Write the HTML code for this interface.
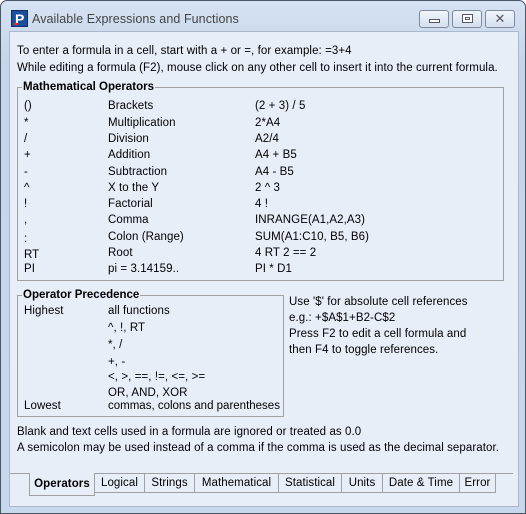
<!DOCTYPE html>
<html><head><style>
*{margin:0;padding:0;box-sizing:border-box}
body{width:526px;height:514px;overflow:hidden;background:#fff;font-family:"Liberation Sans",sans-serif;font-size:11.5px;color:#000;letter-spacing:0.08px}
#win{position:absolute;left:0;top:0;width:526px;height:514px;border:1px solid #4a5565;border-radius:7px 7px 0 0;background:linear-gradient(#d5e2f2,#c6d6ea 60px,#c8d8ec);}
#client{position:absolute;left:8px;top:30px;width:510px;height:476px;background:#e8eef8;border:1px solid #a9b8cc}
.t{position:absolute;white-space:nowrap;line-height:14px}
.box{position:absolute;border:1px solid #a0a0a0}
.lg{position:absolute;background:#e8eef8;font-weight:bold;padding:0 1px;line-height:14px;letter-spacing:0}
.btn{position:absolute;top:9px;height:18px;border:1px solid #7d8aa0;border-radius:3px;background:linear-gradient(#f0f5fb,#d3dfee)}
.tab{position:absolute;top:473px;height:20px;border:1px solid #a0a0a0;border-left:none;line-height:19px;text-align:center;background:#e8eef8}
</style></head><body>
<div id="win">
<div style="position:absolute;left:10px;top:9px;width:17px;height:17px;background:#1a4f9c;border:1px solid #0c2f66"><div style="position:absolute;left:3px;top:1px;color:#fff;font-weight:bold;font-size:14px;line-height:14px">P</div><div style="position:absolute;left:2px;top:12px;width:4px;height:2px;background:#e22"></div></div>
<div class="t" style="left:31px;top:11px;font-size:12.5px;color:#444">Available Expressions and Functions</div>
<div class="btn" style="left:418px;width:30px"><div style="position:absolute;left:9px;top:8px;width:11px;height:4px;border:1px solid #556;background:#fff"></div></div>
<div class="btn" style="left:451px;width:30px"><div style="position:absolute;left:9px;top:3px;width:11px;height:9px;border:1px solid #556;background:#fff"><div style="position:absolute;left:2px;top:2px;width:5px;height:3px;border:1px solid #556"></div></div></div>
<div class="btn" style="left:484px;width:30px;text-align:center;color:#556;line-height:15px;font-size:13px">✕</div>
<div id="client"></div>
</div>
<div class="t" style="left:17px;top:44px">To enter a formula in a cell, start with a + or =, for example: =3+4</div>
<div class="t" style="left:17px;top:61px">While editing a formula (F2), mouse click on any other cell to insert it into the current formula.</div>

<div class="box" style="left:17px;top:87px;width:487px;height:194px"></div>
<div class="lg" style="left:22px;top:80px">Mathematical Operators</div>
<div class="t" style="left:24px;top:99px">()</div><div class="t" style="left:108px;top:99px">Brackets</div><div class="t" style="left:255px;top:99px">(2 + 3) / 5</div>
<div class="t" style="left:24px;top:116px">*</div><div class="t" style="left:108px;top:116px">Multiplication</div><div class="t" style="left:255px;top:116px">2*A4</div>
<div class="t" style="left:24px;top:132px">/</div><div class="t" style="left:108px;top:132px">Division</div><div class="t" style="left:255px;top:132px">A2/4</div>
<div class="t" style="left:24px;top:148px">+</div><div class="t" style="left:108px;top:148px">Addition</div><div class="t" style="left:255px;top:148px">A4 + B5</div>
<div class="t" style="left:24px;top:165px">-</div><div class="t" style="left:108px;top:165px">Subtraction</div><div class="t" style="left:255px;top:165px">A4 - B5</div>
<div class="t" style="left:24px;top:181px">^</div><div class="t" style="left:108px;top:181px">X to the Y</div><div class="t" style="left:255px;top:181px">2 ^ 3</div>
<div class="t" style="left:24px;top:197px">!</div><div class="t" style="left:108px;top:197px">Factorial</div><div class="t" style="left:255px;top:197px">4 !</div>
<div class="t" style="left:24px;top:213px">,</div><div class="t" style="left:108px;top:213px">Comma</div><div class="t" style="left:255px;top:213px">INRANGE(A1,A2,A3)</div>
<div class="t" style="left:24px;top:232px">:</div><div class="t" style="left:108px;top:230px">Colon (Range)</div><div class="t" style="left:255px;top:230px">SUM(A1:C10, B5, B6)</div>
<div class="t" style="left:24px;top:248px">RT</div><div class="t" style="left:108px;top:246px">Root</div><div class="t" style="left:255px;top:246px">4 RT 2 == 2</div>
<div class="t" style="left:24px;top:262px">PI</div><div class="t" style="left:108px;top:262px">pi = 3.14159..</div><div class="t" style="left:255px;top:262px">PI * D1</div>

<div class="box" style="left:17px;top:295px;width:267px;height:122px"></div>
<div class="lg" style="left:22px;top:288px">Operator Precedence</div>
<div class="t" style="left:24px;top:304px">Highest</div><div class="t" style="left:108px;top:304px">all functions</div>
<div class="t" style="left:108px;top:321px">^, !, RT</div>
<div class="t" style="left:108px;top:338px">*, /</div>
<div class="t" style="left:108px;top:355px">+, -</div>
<div class="t" style="left:108px;top:370px">&lt;, &gt;, ==, !=, &lt;=, &gt;=</div>
<div class="t" style="left:108px;top:386px">OR, AND, XOR</div>
<div class="t" style="left:24px;top:399px">Lowest</div><div class="t" style="left:108px;top:399px;letter-spacing:0">commas, colons and parentheses</div>
<div class="t" style="left:289px;top:295px">Use '$' for absolute cell references</div>
<div class="t" style="left:289px;top:311px">e.g.: +$A$1+B2-C$2</div>
<div class="t" style="left:289px;top:327px">Press F2 to edit a cell formula and</div>
<div class="t" style="left:289px;top:343px">then F4 to toggle references.</div>
<div class="t" style="left:17px;top:425px">Blank and text cells used in a formula are ignored or treated as 0.0</div>
<div class="t" style="left:17px;top:441px">A semicolon may be used instead of a comma if the comma is used as the decimal separator.</div>

<div style="position:absolute;left:10px;top:473px;width:503px;border-top:1px solid #a0a0a0"></div>
<div class="tab" style="left:29px;width:66px;top:473px;height:23px;border-left:1px solid #a0a0a0;border-top:none;font-weight:bold;line-height:23px">Operators</div>
<div class="tab" style="left:95px;width:50px">Logical</div>
<div class="tab" style="left:145px;width:50px">Strings</div>
<div class="tab" style="left:195px;width:84px">Mathematical</div>
<div class="tab" style="left:279px;width:63px">Statistical</div>
<div class="tab" style="left:342px;width:41px">Units</div>
<div class="tab" style="left:383px;width:77px">Date &amp; Time</div>
<div class="tab" style="left:460px;width:36px">Error</div>
</body></html>
